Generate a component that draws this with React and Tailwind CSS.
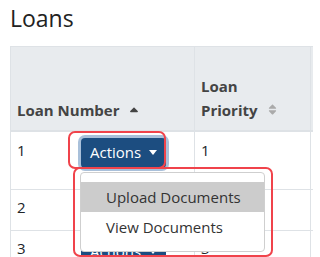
import { FaSortUp, FaSort } from "react-icons/fa"

function ActionsButton({ focused }) {
    return (
        <button
            className={
                "flex items-center gap-[8px] h-[30px] px-[9px] rounded-[4px] bg-[#1c4d80] text-white text-[15px] leading-none " +
                (focused ? "shadow-[0_0_0_3px_#a9c0da]" : "")
            }
        >
            Actions
            <span className="w-0 h-0 border-x-[4px] border-x-transparent border-t-[5px] border-t-white"></span>
        </button>
    )
}

export default function App() {
    return (
        <div className="relative w-[313px] h-[257px] overflow-hidden bg-white font-['Open_Sans',sans-serif] text-[#212529]">
            <h1 className="px-[10px] pt-[4px] text-[23px] leading-[28px] text-[#222]">Loans</h1>

            <table className="mt-[14px] ml-[10px] w-[420px] table-fixed border-collapse text-[15px] leading-[24px]">
                <colgroup>
                    <col className="w-[184px]" />
                    <col className="w-[116px]" />
                    <col />
                </colgroup>
                <thead>
                    <tr className="h-[84px] bg-[#e8ebee] text-[#444] font-bold">
                        <th className="border border-[#dee2e6] border-b-2 align-bottom text-left px-[6px] pb-[8px]">
                            <span className="flex items-center gap-[7px]">
                                Loan Number
                                <FaSortUp className="text-[#444] text-[14px] mt-[6px]" />
                            </span>
                        </th>
                        <th className="border border-[#dee2e6] border-b-2 align-bottom text-left px-[6px] pb-[8px]">
                            Loan
                            <br />
                            <span className="inline-flex items-center gap-[8px]">
                                Priority
                                <FaSort className="text-[#aaa] text-[13px]" />
                            </span>
                        </th>
                        <th className="border border-[#dee2e6] border-b-2"></th>
                    </tr>
                </thead>
                <tbody>
                    <tr className="h-[59px]">
                        <td className="border border-[#dee2e6] align-top px-[6px] pt-[6px]">
                            <div className="flex">
                                <span className="w-[64px]">1</span>
                                <ActionsButton focused />
                            </div>
                        </td>
                        <td className="border border-[#dee2e6] align-top px-[6px] pt-[6px]">1</td>
                        <td className="border border-[#dee2e6]"></td>
                    </tr>
                    <tr className="h-[41px]">
                        <td className="border border-[#dee2e6] align-top px-[6px] pt-[5px]">
                            <div className="flex">
                                <span className="w-[64px]">2</span>
                                <ActionsButton />
                            </div>
                        </td>
                        <td className="border border-[#dee2e6] align-top px-[6px] pt-[5px]">2</td>
                        <td className="border border-[#dee2e6]"></td>
                    </tr>
                    <tr className="h-[41px]">
                        <td className="border border-[#dee2e6] align-top px-[6px] pt-[5px]">
                            <div className="flex">
                                <span className="w-[64px]">3</span>
                                <ActionsButton />
                            </div>
                        </td>
                        <td className="border border-[#dee2e6] align-top px-[6px] pt-[5px]">3</td>
                        <td className="border border-[#dee2e6]"></td>
                    </tr>
                </tbody>
            </table>

            {/* dropdown menu over the rows */}
            <div className="absolute left-[80px] top-[172px] w-[185px] h-[80px] bg-white border border-[#cfcfcf] rounded-[4px] pt-[9px] text-[15px] text-[#333]">
                <div className="h-[30px] bg-[#cccccc] pl-[25px] flex items-center">Upload Documents</div>
                <div className="h-[30px] pl-[25px] flex items-center">View Documents</div>
            </div>

            {/* red highlight boxes */}
            <div className="absolute left-[68px] top-[131px] w-[98px] h-[38px] border-2 border-[#f0434b] rounded-[7px]"></div>
            <div className="absolute left-[73px] top-[167px] w-[200px] h-[90px] border-2 border-[#f0434b] rounded-[7px]"></div>
        </div>
    )
}
